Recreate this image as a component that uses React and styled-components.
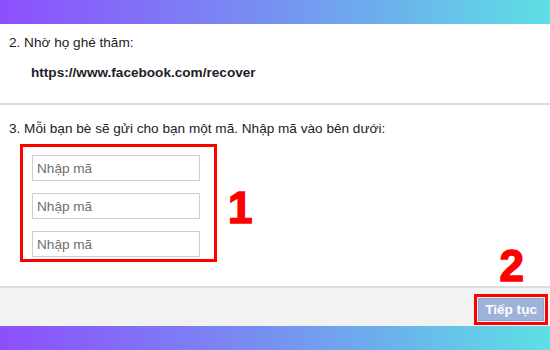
import React from 'react';
import styled, { createGlobalStyle } from 'styled-components';

const Global = createGlobalStyle`
  html, body {
    margin: 0;
    padding: 0;
    background: #ffffff;
  }
  body {
    font-family: "Liberation Sans", Arial, sans-serif;
  }
`;

const Page = styled.div`
  width: 550px;
  height: 350px;
  display: flex;
  flex-direction: column;
  overflow: hidden;
`;

const GradientBar = styled.div`
  height: ${p => p.h}px;
  flex: none;
  background: linear-gradient(90deg, #8d4ffd 0%, #7b84f3 40%, #6cb0ec 70%, #5ee0e4 100%);
`;

const Section = styled.div`
  background: #ffffff;
  padding: ${p => p.pad};
  height: ${p => p.h};
  box-sizing: border-box;
  border-bottom: 2px solid #dcdcdc;
  flex: none;
`;

const StepText = styled.div`
  font-size: 13.6px;
  line-height: 18px;
  color: #1d2129;
`;

const Link = styled.div`
  font-size: 13.6px;
  line-height: 18px;
  font-weight: bold;
  color: #1d2129;
  margin: 12px 0 0 22px;
`;

const CodeRow = styled.div`
  display: flex;
  align-items: flex-start;
  margin-top: 6px;
  margin-left: 11px;
`;

const RedBox = styled.div`
  border: 3px solid #ff0000;
  padding: 8px 14px 2px 9px;
  display: flex;
  flex-direction: column;
  gap: 12px;
`;

const CodeInput = styled.input`
  width: 168px;
  height: 26px;
  box-sizing: border-box;
  border: 1px solid #ccd0d5;
  padding: 0 4px;
  font-family: "Liberation Sans", Arial, sans-serif;
  font-size: 13.6px;
  color: #1d2129;
  outline: none;
  &::placeholder {
    color: #6f6f6f;
  }
`;

const Mark = styled.div`
  color: #ff0000;
  font-family: "Liberation Sans", Arial, sans-serif;
  font-weight: 900;
  font-size: 44px;
  line-height: 44px;
  -webkit-text-stroke: 1.5px #ff0000;
  margin: ${p => p.m};
`;

const Footer = styled.div`
  flex: 1;
  background: #f2f2f2;
  display: flex;
  justify-content: flex-end;
  align-items: center;
  padding: 4px 2px 0 0;
`;

const ButtonFrame = styled.div`
  border: 3px solid #ff0000;
  padding: 1px;
  display: flex;
`;

const Button = styled.button`
  background: #9db3d9;
  border: 1px solid #8fa6cf;
  color: #ffffff;
  font-family: "Liberation Sans", Arial, sans-serif;
  font-weight: bold;
  font-size: 13.6px;
  height: 23px;
  padding: 0 6px;
  cursor: pointer;
`;

export default function App() {
  return (
    <Page>
      <Global />
      <GradientBar h={24} />
      <Section pad="10px 9px 21px">
        <StepText>2. Nhờ họ ghé thăm:</StepText>
        <Link>https://www.facebook.com/recover</Link>
      </Section>
      <Section pad="15px 9px 0" h="183px">
        <StepText>3. Mỗi bạn bè sẽ gửi cho bạn một mã. Nhập mã vào bên dưới:</StepText>
        <CodeRow>
          <RedBox>
            <CodeInput placeholder="Nhập mã" />
            <CodeInput placeholder="Nhập mã" />
            <CodeInput placeholder="Nhập mã" />
          </RedBox>
          <Mark m="42px 0 0 11px">1</Mark>
          <Mark m="100px 17px 0 auto">2</Mark>
        </CodeRow>
      </Section>
      <Footer>
        <ButtonFrame>
          <Button>Tiếp tục</Button>
        </ButtonFrame>
      </Footer>
      <GradientBar h={24} />
    </Page>
  );
}
